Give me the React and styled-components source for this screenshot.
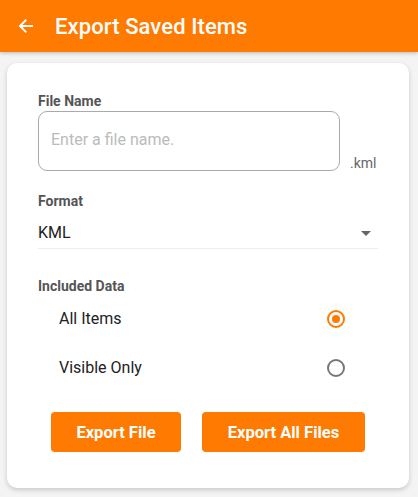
import React, { useState } from "react";
import styled, { createGlobalStyle } from "styled-components";

const Global = createGlobalStyle`
  html, body { margin: 0; padding: 0; background: #f4f4f4; }
  body { font-family: Roboto, "Noto Sans", Arial, sans-serif; }
  * { box-sizing: border-box; }
`;

const Page = styled.div`
  width: 418px;
  min-height: 497px;
  background: #f4f4f4;
  display: flex;
  flex-direction: column;
`;

const Header = styled.header`
  height: 52px;
  flex-shrink: 0;
  background: #ff7a00;
  display: flex;
  align-items: center;
  padding-left: 16px;
  gap: 19px;
  box-shadow: 0 1px 4px rgba(0,0,0,0.25);
  position: relative;
  z-index: 1;
`;

const BackButton = styled.button`
  border: none;
  background: none;
  padding: 0;
  width: 20px;
  height: 20px;
  display: flex;
  align-items: center;
  justify-content: center;
  color: #fff;
`;

const Title = styled.h1`
  margin: 0;
  color: #fff;
  font-size: 22px;
  font-weight: 500;
  letter-spacing: 0.1px;
`;

const Card = styled.div`
  margin: 11px 9px 9px 7px;
  background: #fff;
  border-radius: 10px;
  box-shadow: 0 2px 5px rgba(0,0,0,0.18);
  padding: 30px 31px 36px 31px;
  display: flex;
  flex-direction: column;
`;

const Label = styled.div`
  font-size: 14px;
  font-weight: 700;
  color: #555;
  line-height: 16px;
`;

const FileRow = styled.div`
  display: flex;
  align-items: flex-end;
  gap: 10px;
  margin-top: 2px;
`;

const FileInput = styled.input`
  width: 302px;
  height: 60px;
  border: 1px solid #aaa;
  border-radius: 9px;
  padding: 0 0 4px 12px;
  font-family: inherit;
  font-size: 16px;
  color: #222;
  outline: none;
  &::placeholder { color: #bbb; }
`;

const Ext = styled.span`
  font-size: 14px;
  color: #666;
  line-height: 14px;
  margin-bottom: 1px;
`;

const Section = styled.div`
  margin-top: ${p => p.$top}px;
`;

const Select = styled.div`
  margin-top: 12px;
  width: 340px;
  height: 28px;
  border-bottom: 1px solid #eee;
  display: flex;
  align-items: center;
  justify-content: space-between;
  padding-bottom: 4px;
  font-size: 16px;
  color: #222;
`;

const Caret = styled.span`
  width: 0;
  height: 0;
  border-left: 5px solid transparent;
  border-right: 5px solid transparent;
  border-top: 5px solid #666;
  margin-right: 7px;
  margin-top: 2px;
`;

const RadioList = styled.div`
  display: flex;
  flex-direction: column;
`;

const RadioRow = styled.label`
  height: 49px;
  display: flex;
  align-items: center;
  justify-content: space-between;
  padding-left: 21px;
  width: 307px;
  font-size: 16px;
  color: #222;
  cursor: pointer;
`;

const RadioCircle = styled.span`
  width: 18px;
  height: 18px;
  border-radius: 50%;
  border: 2px solid ${p => (p.$on ? "#ff7a00" : "#777")};
  display: flex;
  align-items: center;
  justify-content: center;
  &::after {
    content: "";
    width: 8px;
    height: 8px;
    border-radius: 50%;
    background: ${p => (p.$on ? "#ff7a00" : "transparent")};
  }
`;

const Buttons = styled.div`
  display: flex;
  gap: 21px;
  margin-top: 20px;
  padding-left: 13px;
`;

const Button = styled.button`
  height: 40px;
  width: ${p => p.$w}px;
  border: none;
  border-radius: 4px;
  background: #ff7a00;
  color: #fff;
  font-family: inherit;
  font-size: 16.5px;
  font-weight: 700;
  cursor: pointer;
`;

export default function App() {
  const [choice, setChoice] = useState("all");
  return (
    <Page>
      <Global />
      <Header>
        <BackButton aria-label="Back">
          <svg width="18" height="18" viewBox="0 0 24 24" fill="none">
            <path d="M20 12H4.5M11.5 4.5L4 12l7.5 7.5" stroke="#fff" strokeWidth="2.6" strokeLinecap="square" />
          </svg>
        </BackButton>
        <Title>Export Saved Items</Title>
      </Header>
      <Card>
        <Label>File Name</Label>
        <FileRow>
          <FileInput placeholder="Enter a file name." />
          <Ext>.kml</Ext>
        </FileRow>
        <Section $top={22}>
          <Label>Format</Label>
          <Select>
            <span>KML</span>
            <Caret />
          </Select>
        </Section>
        <Section $top={29}>
          <Label>Included Data</Label>
          <RadioList>
            <RadioRow onClick={() => setChoice("all")}>
              <span>All Items</span>
              <RadioCircle $on={choice === "all"} />
            </RadioRow>
            <RadioRow onClick={() => setChoice("visible")}>
              <span>Visible Only</span>
              <RadioCircle $on={choice === "visible"} />
            </RadioRow>
          </RadioList>
        </Section>
        <Buttons>
          <Button $w={130}>Export File</Button>
          <Button $w={163}>Export All Files</Button>
        </Buttons>
      </Card>
    </Page>
  );
}
